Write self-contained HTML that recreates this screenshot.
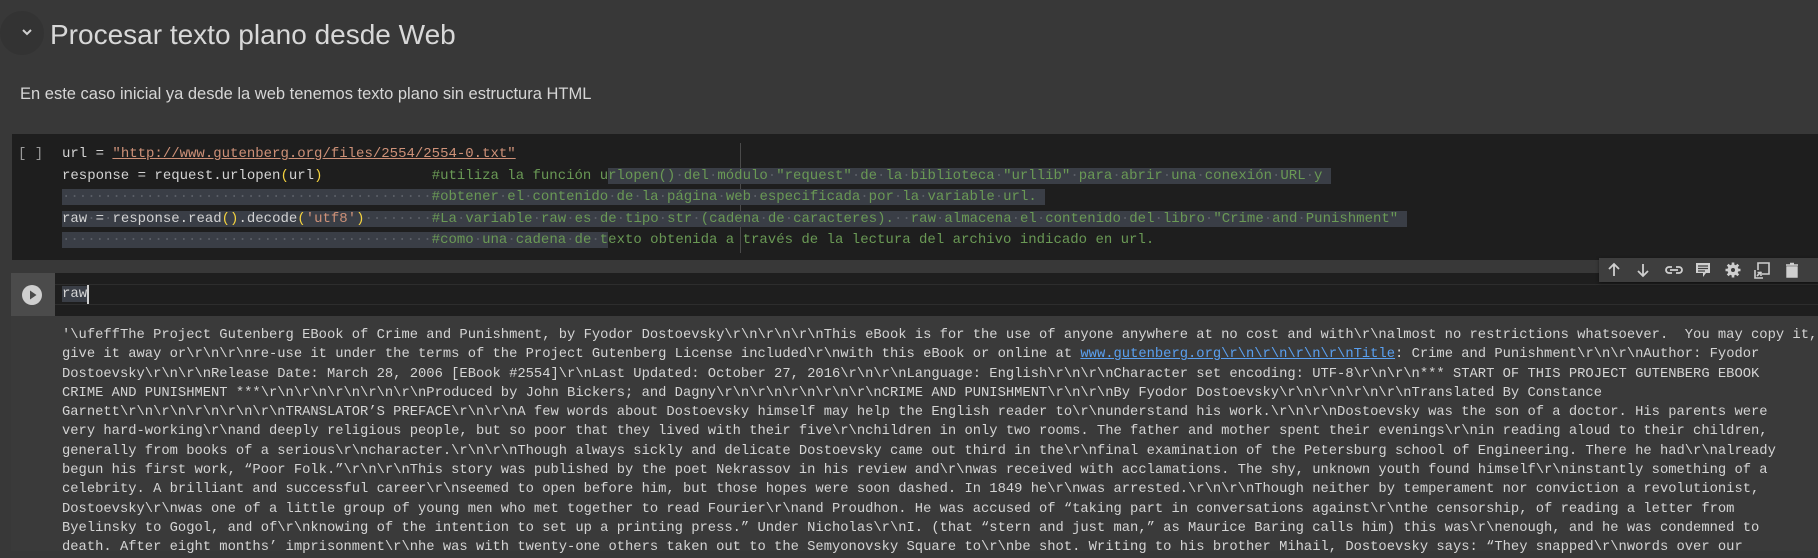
<!DOCTYPE html>
<html><head><meta charset="utf-8"><style>
html,body{margin:0;padding:0;}
body{width:1818px;height:551px;background:#383838;position:relative;overflow:hidden;font-family:"Liberation Sans",sans-serif;}
.abs{position:absolute;}
.h1{left:50px;top:16px;font-size:28px;color:#d8d8d8;white-space:nowrap;line-height:38px;}
.p{left:20px;top:82px;font-size:16.5px;color:#d6d6d6;white-space:nowrap;line-height:24px;}
.code{left:12px;top:134px;width:1806px;height:126px;background:#1e1e1e;}
.mono{font-family:"Liberation Mono",monospace;white-space:pre;}
.cl{position:absolute;left:62px;font-size:14px;line-height:21.5px;color:#d4d4d4;}
.s{background:#3a3e46;}
.str{color:#ce9178;}
.lnk{color:#ce9178;text-decoration:underline;text-decoration-color:#ce9178;}
.par{color:#f5d33f;}
.cm{color:#6a9955;}
.dot{color:#5a5e66;}
.out{position:absolute;left:62px;top:326px;font-size:13.8px;line-height:19.3px;color:#d4d4d4;width:1756px;overflow:hidden;}
.out a{color:#5aa0f0;text-decoration:underline;}
</style></head><body>

<div class="abs" style="left:0;top:11px;width:44px;height:44px;border-radius:50%;background:#333;"></div>
<svg class="abs" style="left:20px;top:27px" width="14" height="10" viewBox="0 0 14 10"><path d="M3 3 L7 7 L11 3" stroke="#d0d0d0" stroke-width="2" fill="none"/></svg>
<div class="abs h1">Procesar texto plano desde Web</div>
<div class="abs p">En este caso inicial ya desde la web tenemos texto plano sin estructura HTML</div>

<div class="abs code"></div>
<div class="abs mono" style="left:18px;top:144px;font-size:14px;line-height:21.5px;color:#9a9a9a;">[ ]</div>
<div class="abs" style="left:740px;top:143px;width:1px;height:110px;background:#4a4a4a;"></div>
<div class="mono cl" style="top:144px">url = <span class="lnk">"http://www.gutenberg.org/files/2554/2554-0.txt"</span></div>
<div class="mono cl" style="top:165.5px">response = request.urlopen<span class="par">(</span>url<span class="par">)</span>             <span class="cm">#utiliza la función u</span><span class="s"><span class="cm">rlopen()<span class="dot">·</span>del<span class="dot">·</span>módulo<span class="dot">·</span>"request"<span class="dot">·</span>de<span class="dot">·</span>la<span class="dot">·</span>biblioteca<span class="dot">·</span>"urllib"<span class="dot">·</span>para<span class="dot">·</span>abrir<span class="dot">·</span>una<span class="dot">·</span>conexión<span class="dot">·</span>URL<span class="dot">·</span>y</span> </span></div>
<div class="mono cl" style="top:187px"><span class="s"><span class="dot">············································</span><span class="cm">#obtener<span class="dot">·</span>el<span class="dot">·</span>contenido<span class="dot">·</span>de<span class="dot">·</span>la<span class="dot">·</span>página<span class="dot">·</span>web<span class="dot">·</span>especificada<span class="dot">·</span>por<span class="dot">·</span>la<span class="dot">·</span>variable<span class="dot">·</span>url.</span> </span></div>
<div class="mono cl" style="top:208.5px"><span class="s">raw<span class="dot">·</span>=<span class="dot">·</span>response.read<span class="par">()</span>.decode<span class="par">(</span><span class="str">'utf8'</span><span class="par">)</span><span class="dot">········</span><span class="cm">#La<span class="dot">·</span>variable<span class="dot">·</span>raw<span class="dot">·</span>es<span class="dot">·</span>de<span class="dot">·</span>tipo<span class="dot">·</span>str<span class="dot">·</span>(cadena<span class="dot">·</span>de<span class="dot">·</span>caracteres).<span class="dot">··</span>raw<span class="dot">·</span>almacena<span class="dot">·</span>el<span class="dot">·</span>contenido<span class="dot">·</span>del<span class="dot">·</span>libro<span class="dot">·</span>"Crime<span class="dot">·</span>and<span class="dot">·</span>Punishment"</span> </span></div>
<div class="mono cl" style="top:230px"><span class="s"><span class="dot">············································</span><span class="cm">#como<span class="dot">·</span>una<span class="dot">·</span>cadena<span class="dot">·</span>de<span class="dot">·</span>t</span></span><span class="cm">exto obtenida a través de la lectura del archivo indicado en url.</span></div>

<!-- second cell -->
<div class="abs" style="left:11px;top:316px;width:1807px;height:235px;background:#3a3a3a;"></div>
<div class="abs" style="left:11px;top:273px;width:44px;height:43px;background:#4b4b4b;"></div>
<div class="abs" style="left:22px;top:285px;width:20px;height:20px;border-radius:50%;background:#cfcfcf;"></div>
<svg class="abs" style="left:22px;top:285px" width="20" height="20" viewBox="0 0 20 20"><path d="M8 5.5 L14.5 10 L8 14.5 Z" fill="#4b4b4b"/></svg>
<div class="abs" style="left:55px;top:273px;width:1763px;height:43px;background:#1e1e1e;"></div>
<div class="abs" style="left:55px;top:284px;width:1763px;height:19px;border-top:1px solid #2d2d2d;border-bottom:1px solid #2d2d2d;"></div>
<div class="abs mono" style="left:62px;top:284px;font-size:14px;line-height:21px;color:#d4d4d4;"><span class="s">raw</span></div>
<div class="abs" style="left:87px;top:285px;width:2px;height:19px;background:#d0d0d0;"></div>

<!-- toolbar -->
<div class="abs" style="left:1599px;top:258px;width:219px;height:24px;background:#3e3e3e;box-shadow:0 1px 3px rgba(0,0,0,.5);"></div>
<svg class="abs" style="left:1599px;top:258px" width="219" height="24" viewBox="0 0 219 24">
<g fill="none" stroke="#cfcfcf" stroke-width="1.8">
<path d="M15 18 V6 M10 11 L15 6 L20 11"/>
<path d="M44 6 V18 M39 13 L44 18 L49 13"/>
<path d="M73 9 H70 A3 3 0 0 0 70 15 H73 M77 9 H80 A3 3 0 0 1 80 15 H77 M71 12 H79"/>
</g>
<path d="M97 5 H111 V15 H107 L104 19 V15 H97 Z" fill="#cfcfcf"/>
<path d="M99 8 H109 M99 10.5 H109 M99 13 H106" stroke="#3e3e3e" stroke-width="1.3"/>
<circle cx="134" cy="12" r="5.5" fill="#cfcfcf"/>
<g stroke="#cfcfcf" stroke-width="2.6"><path d="M134 4.5 V19.5 M126.5 12 H141.5 M128.7 6.7 L139.3 17.3 M139.3 6.7 L128.7 17.3"/></g>
<circle cx="134" cy="12" r="2" fill="#3e3e3e"/>
<g fill="none" stroke="#cfcfcf" stroke-width="1.6"><path d="M159 12 V5 H170 V16 H163"/><path d="M156 12 V20 H164"/><path d="M158 18 L162 14 M158.5 14.5 H162 V18"/></g>
<path d="M187 7 H199 M191 5.5 H195 M188 9 H198 V19 H188 Z" fill="#cfcfcf" stroke="#cfcfcf" stroke-width="1.4"/>
</svg>

<div class="mono out">'\ufeffThe Project Gutenberg EBook of Crime and Punishment, by Fyodor Dostoevsky\r\n\r\n\r\nThis eBook is for the use of anyone anywhere at no cost and with\r\nalmost no restrictions whatsoever.  You may copy it,
give it away or\r\n\r\nre-use it under the terms of the Project Gutenberg License included\r\nwith this eBook or online at <a>www.gutenberg.org\r\n\r\n\r\n\r\nTitle</a>: Crime and Punishment\r\n\r\nAuthor: Fyodor
Dostoevsky\r\n\r\nRelease Date: March 28, 2006 [EBook #2554]\r\nLast Updated: October 27, 2016\r\n\r\nLanguage: English\r\n\r\nCharacter set encoding: UTF-8\r\n\r\n*** START OF THIS PROJECT GUTENBERG EBOOK
CRIME AND PUNISHMENT ***\r\n\r\n\r\n\r\n\r\nProduced by John Bickers; and Dagny\r\n\r\n\r\n\r\n\r\nCRIME AND PUNISHMENT\r\n\r\nBy Fyodor Dostoevsky\r\n\r\n\r\n\r\nTranslated By Constance
Garnett\r\n\r\n\r\n\r\n\r\nTRANSLATOR’S PREFACE\r\n\r\nA few words about Dostoevsky himself may help the English reader to\r\nunderstand his work.\r\n\r\nDostoevsky was the son of a doctor. His parents were
very hard-working\r\nand deeply religious people, but so poor that they lived with their five\r\nchildren in only two rooms. The father and mother spent their evenings\r\nin reading aloud to their children,
generally from books of a serious\r\ncharacter.\r\n\r\nThough always sickly and delicate Dostoevsky came out third in the\r\nfinal examination of the Petersburg school of Engineering. There he had\r\nalready
begun his first work, “Poor Folk.”\r\n\r\nThis story was published by the poet Nekrassov in his review and\r\nwas received with acclamations. The shy, unknown youth found himself\r\ninstantly something of a
celebrity. A brilliant and successful career\r\nseemed to open before him, but those hopes were soon dashed. In 1849 he\r\nwas arrested.\r\n\r\nThough neither by temperament nor conviction a revolutionist,
Dostoevsky\r\nwas one of a little group of young men who met together to read Fourier\r\nand Proudhon. He was accused of “taking part in conversations against\r\nthe censorship, of reading a letter from
Byelinsky to Gogol, and of\r\nknowing of the intention to set up a printing press.” Under Nicholas\r\nI. (that “stern and just man,” as Maurice Baring calls him) this was\r\nenough, and he was condemned to
death. After eight months’ imprisonment\r\nhe was with twenty-one others taken out to the Semyonovsky Square to\r\nbe shot. Writing to his brother Mihail, Dostoevsky says: “They snapped\r\nwords over our</div>
</body></html>
